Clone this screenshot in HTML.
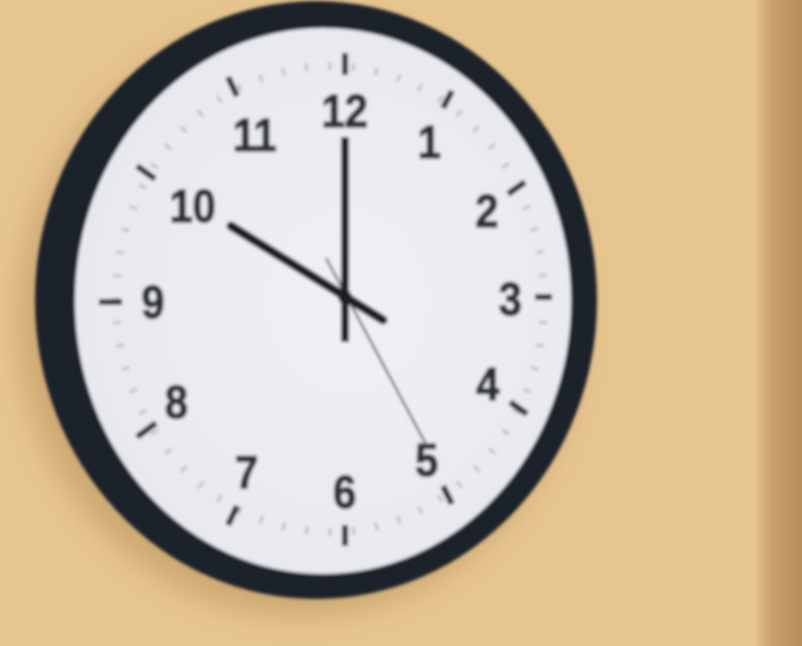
<!DOCTYPE html>
<html><head><meta charset="utf-8"><style>
html,body{margin:0;padding:0;width:802px;height:646px;overflow:hidden;background:#e7c590;}
svg{display:block}
</style></head><body>
<svg width="802" height="646" viewBox="0 0 802 646" xmlns="http://www.w3.org/2000/svg">
<defs>
<filter id="b1" x="-20%" y="-20%" width="140%" height="140%"><feGaussianBlur stdDeviation="1.6"/></filter>
<filter id="sh" x="-30%" y="-30%" width="160%" height="160%"><feGaussianBlur stdDeviation="14"/></filter>
<linearGradient id="edge" x1="0" x2="1" y1="0" y2="0">
<stop offset="0" stop-color="#e2bf89"/><stop offset="0.35" stop-color="#c9a16b"/><stop offset="1" stop-color="#b88f5c"/></linearGradient>
<radialGradient id="face" cx="0.55" cy="0.5" r="0.6">
<stop offset="0" stop-color="#f0f1f5"/><stop offset="1" stop-color="#e6e8ef"/></radialGradient>
</defs>
<rect x="0" y="0" width="802" height="646" fill="#e7c590"/>
<rect x="756" y="0" width="46" height="646" fill="url(#edge)"/>
<ellipse cx="300" cy="318" rx="282" ry="298" fill="#b8915a" opacity="0.55" filter="url(#sh)"/>
<g filter="url(#b1)">
<ellipse cx="316" cy="300" rx="281" ry="299" fill="#1f232b"/>
<ellipse cx="323" cy="301" rx="248" ry="273" fill="url(#face)"/>
<ellipse cx="330" cy="299" rx="214" ry="233" fill="none" stroke="#b9bcc4" stroke-width="8" pathLength="60" stroke-dasharray="0.12 0.88" stroke-dashoffset="0.06"/>
<g stroke="#2a2d33" stroke-width="6" stroke-linecap="butt">
<line x1="345" y1="53" x2="345" y2="75"/>
<line x1="443" y1="108" x2="452" y2="91"/>
<line x1="508" y1="194" x2="525" y2="182"/>
<line x1="535" y1="297" x2="552" y2="297"/>
<line x1="510" y1="402" x2="527" y2="414"/>
<line x1="443" y1="486" x2="452" y2="504"/>
<line x1="345" y1="525" x2="345" y2="546"/>
<line x1="237" y1="506" x2="228" y2="525"/>
<line x1="156" y1="423" x2="137" y2="437"/>
<line x1="99" y1="302" x2="122" y2="302"/>
<line x1="137" y1="166" x2="155" y2="179"/>
<line x1="228" y1="77" x2="237" y2="96"/>
</g>
<g font-family="Liberation Sans, sans-serif" font-weight="bold" font-size="46" fill="#2c2f35" stroke="#2c2f35" stroke-width="1.5" text-anchor="middle" transform="scale(0.9,1)">
<text x="383" y="127">12</text>
<text x="477" y="158">1</text>
<text x="541" y="227">2</text>
<text x="567" y="315">3</text>
<text x="542" y="400">4</text>
<text x="474" y="476">5</text>
<text x="383" y="508">6</text>
<text x="274" y="488">7</text>
<text x="196" y="418">8</text>
<text x="170" y="318">9</text>
<text x="214" y="222">10</text>
<text x="283" y="151">11</text>
</g>
<line x1="326" y1="258" x2="428" y2="448" stroke="#4a4d55" stroke-width="2.2"/>
<line x1="231" y1="226" x2="383" y2="320" stroke="#1c1f25" stroke-width="9" stroke-linecap="round"/>
<line x1="345" y1="137" x2="345" y2="342" stroke="#1c1f25" stroke-width="8"/>
<circle cx="345" cy="297" r="7" fill="#1c1f25"/>
</g>
</svg>
</body></html>
